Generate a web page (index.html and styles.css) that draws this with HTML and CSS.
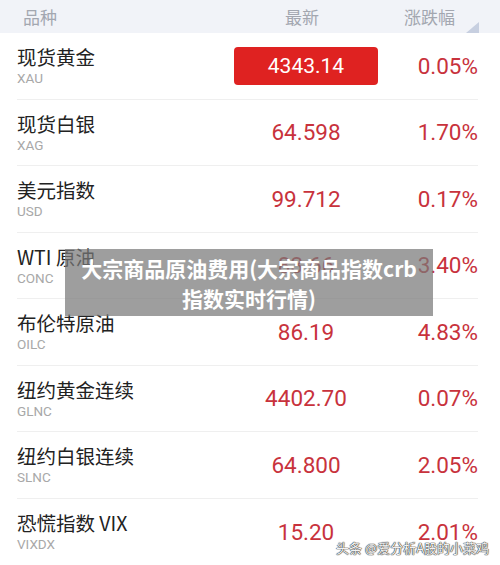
FILE: index.html
```html
<!DOCTYPE html>
<html lang="zh">
<head>
<meta charset="utf-8">
<link rel="stylesheet" href="styles.css">
</head>
<body>
<div class="page">
  <div class="head">
    <span class="h-name">品种</span>
    <span class="h-val">最新</span>
    <span class="h-pct">涨跌幅</span>
    <span class="tri"></span>
  </div>
  <div class="list">
    <div class="row">
      <div class="name"><div class="cn">现货黄金</div><div class="code">XAU</div></div>
      <div class="val"><span class="btn">4343.14</span></div>
      <div class="pct">0.05%</div>
    </div>
    <div class="row">
      <div class="name"><div class="cn">现货白银</div><div class="code">XAG</div></div>
      <div class="val">64.598</div>
      <div class="pct">1.70%</div>
    </div>
    <div class="row">
      <div class="name"><div class="cn">美元指数</div><div class="code">USD</div></div>
      <div class="val">99.712</div>
      <div class="pct">0.17%</div>
    </div>
    <div class="row">
      <div class="name"><div class="cn">WTI 原油</div><div class="code">CONC</div></div>
      <div class="val">83.66</div>
      <div class="pct">3.40%</div>
    </div>
    <div class="row">
      <div class="name"><div class="cn">布伦特原油</div><div class="code">OILC</div></div>
      <div class="val">86.19</div>
      <div class="pct">4.83%</div>
    </div>
    <div class="row">
      <div class="name"><div class="cn">纽约黄金连续</div><div class="code">GLNC</div></div>
      <div class="val">4402.70</div>
      <div class="pct">0.07%</div>
    </div>
    <div class="row">
      <div class="name"><div class="cn">纽约白银连续</div><div class="code">SLNC</div></div>
      <div class="val">64.800</div>
      <div class="pct">2.05%</div>
    </div>
    <div class="row last">
      <div class="name"><div class="cn">恐慌指数 VIX</div><div class="code">VIXDX</div></div>
      <div class="val">15.20</div>
      <div class="pct">2.01%</div>
    </div>
  </div>
  <div class="overlay">大宗商品原油费用(大宗商品指数crb<br>指数实时行情)</div>
  <div class="mark">头条 @爱分析A股的小菜鸡</div>
</div>
</body>
</html>
```
FILE: styles.css
```css
html, body {
  margin: 0;
  padding: 0;
  background: #fff;
}
.page {
  position: relative;
  width: 500px;
  height: 565px;
  overflow: hidden;
  font-family: "Noto Sans CJK SC", "Noto Sans", sans-serif;
}
.head {
  position: relative;
  height: 33px;
  background: #f1f3f8;
  display: grid;
  grid-template-columns: 218px 130px 1fr;
  align-items: center;
  padding: 0 45px 0 23px;
  color: #a3a7b0;
  font-size: 17px;
}
.h-val { justify-self: start; padding-left: 44px; }
.h-pct { justify-self: end; }
.tri {
  position: absolute;
  right: 21px;
  bottom: 0;
  width: 0;
  height: 0;
  border-left: 13px solid transparent;
  border-bottom: 11px solid #c7cfe0;
}
.list {
  margin: 0 22px 0 17px;
}
.row {
  height: 66.5px;
  box-sizing: border-box;
  border-bottom: 1px solid #efefef;
  display: grid;
  grid-template-columns: 217px 144px 1fr;
  align-items: center;
}
.row.last { border-bottom: none; }
.cn {
  font-size: 19.5px;
  line-height: 23px;
  color: #222;
}
.code {
  margin-top: 2px;
  font-family: "Roboto", "Noto Sans", sans-serif;
  font-size: 13.5px;
  line-height: 16px;
  color: #a8a8a8;
}
.val {
  text-align: center;
  font-family: "Roboto", "Noto Sans", sans-serif;
  font-size: 22.5px;
  color: #c8323c;
}
.btn {
  display: block;
  height: 38px;
  line-height: 38px;
  background: #df2221;
  border-radius: 4px;
  color: #fff;
  font-size: 21px;
}
.pct {
  text-align: right;
  font-family: "Roboto", "Noto Sans", sans-serif;
  font-size: 22.5px;
  color: #c8323c;
}
.overlay {
  position: absolute;
  left: 65px;
  top: 249px;
  width: 368px;
  height: 67px;
  box-sizing: border-box;
  padding-top: 4px;
  background: rgba(120, 120, 120, 0.72);
  color: #fff;
  font-weight: bold;
  font-size: 21px;
  line-height: 30px;
  text-align: center;
}
.mark {
  position: absolute;
  left: 336px;
  top: 538px;
  font-size: 13px;
  color: #f2f2f2;
  text-shadow: 0 0 1px #333, 0 0 1px #333, 0 0 1px #333;
}
```
